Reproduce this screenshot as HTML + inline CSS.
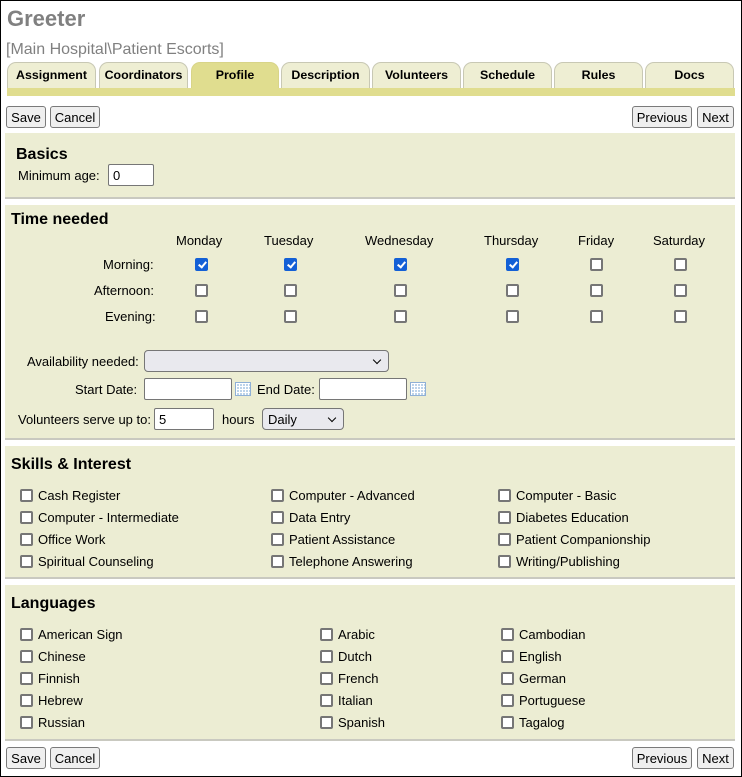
<!DOCTYPE html><html><head><style>
*{box-sizing:border-box;margin:0;padding:0}
body{width:742px;height:777px;position:relative;font-family:"Liberation Sans",Arial,sans-serif;font-size:13px;color:#000;background:#fff;overflow:hidden}
.a{position:absolute;white-space:nowrap;line-height:16px;margin-top:1px}
.frame{position:absolute;left:0;top:0;width:742px;height:777px;border:1px solid #000}
.tab{position:absolute;top:62px;height:27px;width:89px;background:#eeeed3;border:1px solid #c8c8b4;border-bottom:none;border-radius:9px 9px 0 0;font-weight:bold;text-align:center;line-height:25px;font-size:12.4px}
.tab.on{background:#e0dd8f;border-color:#d8d488}
.bar{position:absolute;left:7px;top:88px;width:728px;height:8px;background:#e0dd8f}
.btn{position:absolute;height:22px;border:1px solid #7a7a7a;border-radius:3px;background:#efefef;line-height:21px;text-align:center;font-size:13px}
.pan{position:absolute;left:5px;width:730px;background:#ecedd3;border-bottom:2px solid #c9c9c0}
h3{position:absolute;font-size:16px;font-weight:bold;line-height:18px;margin-top:1px}
.cb{position:absolute;width:13px;height:13px;border:2px solid #767676;border-radius:2px;background:#fff}
.cb.c{background:#1360d6;border-color:#1360d6}
.cb.c:after{content:"";position:absolute;left:3px;top:0px;width:3px;height:6px;border:solid #fff;border-width:0 2px 2px 0;transform:rotate(40deg)}
.in{position:absolute;height:22px;border:1px solid #767676;border-radius:2px;background:#fff;padding-left:4px;line-height:21px}
.sel{position:absolute;height:22px;border:1px solid #767676;border-radius:4px;background:#e9e9ee;padding-left:5px;line-height:21px}
.sel:after{content:"";position:absolute;right:8px;top:6px;width:5px;height:5px;border:solid #000;border-width:0 1.5px 1.5px 0;transform:rotate(45deg)}
.cal{position:absolute;width:16px;height:14px;background:#bcd3ea;border:1px solid #8fb0d6;background-image:linear-gradient(#fff 1px,transparent 1px),linear-gradient(90deg,#fff 1px,transparent 1px);background-size:3px 3px}
</style></head><body>
<div class="frame"></div>
<div class="a" style="left:7px;top:5px;font-size:22px;line-height:26px;font-weight:bold;color:#808080">Greeter</div>
<div class="a" style="left:6px;top:40px;font-size:16px;line-height:18px;color:#808080">[Main Hospital\Patient Escorts]</div>
<div class="tab" style="left:7px">Assignment</div>
<div class="tab" style="left:99px">Coordinators</div>
<div class="tab on" style="left:191px;width:88px">Profile</div>
<div class="tab" style="left:281px;width:89px">Description</div>
<div class="tab" style="left:372px">Volunteers</div>
<div class="tab" style="left:463px">Schedule</div>
<div class="tab" style="left:554px">Rules</div>
<div class="tab" style="left:645px">Docs</div>
<div class="bar"></div>
<div class="btn" style="left:6px;top:106px;width:40px">Save</div>
<div class="btn" style="left:50px;top:106px;width:50px">Cancel</div>
<div class="btn" style="left:632px;top:106px;width:60px">Previous</div>
<div class="btn" style="left:697px;top:106px;width:37px">Next</div>

<div class="pan" style="top:133px;height:66px"></div>
<h3 style="left:16px;top:145px">Basics</h3>
<div class="a" style="left:18px;top:167px">Minimum age:</div>
<div class="in" style="left:108px;top:164px;width:46px">0</div>

<div class="pan" style="top:205px;height:235px"></div>
<h3 style="left:11px;top:210px">Time needed</h3>
<div class="a" style="left:176px;top:232px">Monday</div>
<div class="a" style="left:264px;top:232px">Tuesday</div>
<div class="a" style="left:365px;top:232px">Wednesday</div>
<div class="a" style="left:484px;top:232px">Thursday</div>
<div class="a" style="left:578px;top:232px">Friday</div>
<div class="a" style="left:653px;top:232px">Saturday</div>
<div class="a" style="left:103px;top:256px">Morning:</div>
<div class="a" style="left:94px;top:282px">Afternoon:</div>
<div class="a" style="left:105px;top:308px">Evening:</div>
<div class="cb c" style="left:195px;top:258px"></div><div class="cb c" style="left:284px;top:258px"></div><div class="cb c" style="left:394px;top:258px"></div><div class="cb c" style="left:506px;top:258px"></div><div class="cb" style="left:590px;top:258px"></div><div class="cb" style="left:674px;top:258px"></div>
<div class="cb" style="left:195px;top:284px"></div><div class="cb" style="left:284px;top:284px"></div><div class="cb" style="left:394px;top:284px"></div><div class="cb" style="left:506px;top:284px"></div><div class="cb" style="left:590px;top:284px"></div><div class="cb" style="left:674px;top:284px"></div>
<div class="cb" style="left:195px;top:310px"></div><div class="cb" style="left:284px;top:310px"></div><div class="cb" style="left:394px;top:310px"></div><div class="cb" style="left:506px;top:310px"></div><div class="cb" style="left:590px;top:310px"></div><div class="cb" style="left:674px;top:310px"></div>
<div class="a" style="left:27px;top:353px">Availability needed:</div>
<div class="sel" style="left:144px;top:350px;width:245px"></div>
<div class="a" style="left:75px;top:381px">Start Date:</div>
<div class="in" style="left:144px;top:378px;width:88px"></div>
<div class="cal" style="left:235px;top:382px"></div>
<div class="a" style="left:257px;top:381px">End Date:</div>
<div class="in" style="left:319px;top:378px;width:88px"></div>
<div class="cal" style="left:410px;top:382px"></div>
<div class="a" style="left:18px;top:411px">Volunteers serve up to:</div>
<div class="in" style="left:154px;top:408px;width:60px">5</div>
<div class="a" style="left:222px;top:411px">hours</div>
<div class="sel" style="left:262px;top:408px;width:82px">Daily</div>

<div class="pan" style="top:446px;height:133px"></div>
<h3 style="left:11px;top:455px">Skills &amp; Interest</h3>
<div class="cb" style="left:20px;top:489px"></div><div class="a" style="left:38px;top:487px">Cash Register</div>
<div class="cb" style="left:271px;top:489px"></div><div class="a" style="left:289px;top:487px">Computer - Advanced</div>
<div class="cb" style="left:498px;top:489px"></div><div class="a" style="left:516px;top:487px">Computer - Basic</div>
<div class="cb" style="left:20px;top:511px"></div><div class="a" style="left:38px;top:509px">Computer - Intermediate</div>
<div class="cb" style="left:271px;top:511px"></div><div class="a" style="left:289px;top:509px">Data Entry</div>
<div class="cb" style="left:498px;top:511px"></div><div class="a" style="left:516px;top:509px">Diabetes Education</div>
<div class="cb" style="left:20px;top:533px"></div><div class="a" style="left:38px;top:531px">Office Work</div>
<div class="cb" style="left:271px;top:533px"></div><div class="a" style="left:289px;top:531px">Patient Assistance</div>
<div class="cb" style="left:498px;top:533px"></div><div class="a" style="left:516px;top:531px">Patient Companionship</div>
<div class="cb" style="left:20px;top:555px"></div><div class="a" style="left:38px;top:553px">Spiritual Counseling</div>
<div class="cb" style="left:271px;top:555px"></div><div class="a" style="left:289px;top:553px">Telephone Answering</div>
<div class="cb" style="left:498px;top:555px"></div><div class="a" style="left:516px;top:553px">Writing/Publishing</div>

<div class="pan" style="top:585px;height:156px"></div>
<h3 style="left:11px;top:594px">Languages</h3>
<div class="cb" style="left:20px;top:628px"></div><div class="a" style="left:38px;top:626px">American Sign</div>
<div class="cb" style="left:320px;top:628px"></div><div class="a" style="left:338px;top:626px">Arabic</div>
<div class="cb" style="left:501px;top:628px"></div><div class="a" style="left:519px;top:626px">Cambodian</div>
<div class="cb" style="left:20px;top:650px"></div><div class="a" style="left:38px;top:648px">Chinese</div>
<div class="cb" style="left:320px;top:650px"></div><div class="a" style="left:338px;top:648px">Dutch</div>
<div class="cb" style="left:501px;top:650px"></div><div class="a" style="left:519px;top:648px">English</div>
<div class="cb" style="left:20px;top:672px"></div><div class="a" style="left:38px;top:670px">Finnish</div>
<div class="cb" style="left:320px;top:672px"></div><div class="a" style="left:338px;top:670px">French</div>
<div class="cb" style="left:501px;top:672px"></div><div class="a" style="left:519px;top:670px">German</div>
<div class="cb" style="left:20px;top:694px"></div><div class="a" style="left:38px;top:692px">Hebrew</div>
<div class="cb" style="left:320px;top:694px"></div><div class="a" style="left:338px;top:692px">Italian</div>
<div class="cb" style="left:501px;top:694px"></div><div class="a" style="left:519px;top:692px">Portuguese</div>
<div class="cb" style="left:20px;top:716px"></div><div class="a" style="left:38px;top:714px">Russian</div>
<div class="cb" style="left:320px;top:716px"></div><div class="a" style="left:338px;top:714px">Spanish</div>
<div class="cb" style="left:501px;top:716px"></div><div class="a" style="left:519px;top:714px">Tagalog</div>

<div class="btn" style="left:6px;top:747px;width:40px">Save</div>
<div class="btn" style="left:50px;top:747px;width:50px">Cancel</div>
<div class="btn" style="left:632px;top:747px;width:60px">Previous</div>
<div class="btn" style="left:697px;top:747px;width:37px">Next</div>
</body></html>
